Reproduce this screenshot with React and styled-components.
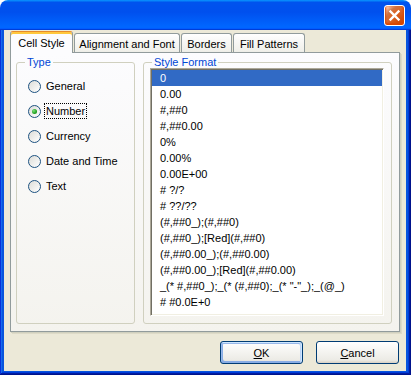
import React from "react";
import styled, { createGlobalStyle } from "styled-components";

const Global = createGlobalStyle`
  html, body { margin: 0; padding: 0; background: #ffffff; }
  body {
    font-family: "Liberation Sans", Tahoma, Arial, sans-serif;
    font-size: 11px;
    color: #000;
  }
  * { box-sizing: border-box; }
`;

const Window = styled.div`
  width: 411px;
  height: 375px;
  display: flex;
  flex-direction: column;
`;

const TitleBar = styled.div`
  flex: none;
  height: 30px;
  border-radius: 8px 8px 0 0;
  background: linear-gradient(
    180deg,
    #0997ff,
    #0053ee 8%,
    #0050ee 40%,
    #0066ff 88%,
    #0066ff 93%,
    #005bff 95%,
    #003dd7 96%,
    #003dd7
  );
  display: flex;
  justify-content: flex-end;
  align-items: flex-start;
  padding: 5px 6px 0 0;
`;

const CloseButton = styled.button`
  width: 21px;
  height: 21px;
  padding: 0;
  border: 1px solid #ffffff;
  border-radius: 3px;
  background: radial-gradient(
    circle at 90% 90%,
    #cc4600 0%,
    #dc6527 55%,
    #cd7546 70%,
    #ffccb2 90%,
    #ffffff 100%
  );
  box-shadow: inset 0 -1px 2px 1px #da4600;
  display: flex;
  align-items: center;
  justify-content: center;
`;

const Frame = styled.div`
  flex: 1;
  display: flex;
  padding: 0 5px 4px 4px;
  background: #0855dd;
  box-shadow: inset -1px -1px #00138c, inset 1px 0 #0831d9,
    inset -2px -2px #001ea0, inset 2px 0 #166aee, inset -3px -3px #003bda,
    inset 3px 0 #0855dd;
`;

const Client = styled.div`
  flex: 1;
  background: #ece9d8;
  display: flex;
  flex-direction: column;
  padding: 1px 6px 0 6px;
`;

const TabStrip = styled.div`
  height: 21px;
  display: flex;
  align-items: flex-end;
  gap: 1px;
  position: relative;
  z-index: 1;
`;

const Tab = styled.div`
  width: ${(p) => p.$w}px;
  height: ${(p) => (p.$active ? 22 : 19)}px;
  margin-bottom: ${(p) => (p.$active ? -1 : 0)}px;
  display: flex;
  align-items: center;
  justify-content: center;
  padding-top: ${(p) => (p.$active ? 0 : 1)}px;
  border: 1px solid #919b9c;
  border-bottom: none;
  border-radius: 3px 3px 0 0;
  border-top-color: ${(p) => (p.$active ? "#e68b2c" : "#919b9c")};
  background: ${(p) =>
    p.$active
      ? "#fcfcfe"
      : "linear-gradient(180deg, #fff, #fafaf9 26%, #f0f0ea 95%, #ecebe5)"};
  box-shadow: ${(p) => (p.$active ? "inset 0 2px #ffc83c" : "none")};
  white-space: nowrap;
`;

const TabPanel = styled.div`
  height: 280px;
  flex: none;
  border: 1px solid #919b9c;
  background: linear-gradient(180deg, #fcfcfe, #f4f3ee);
  box-shadow: 1px 1px #d0d0bf, 2px 2px #dedbc8;
  display: flex;
  gap: 8px;
  padding: 3px 7px 7px 5px;
`;

const Group = styled.fieldset`
  margin: 0;
  padding: 0;
  min-width: 0;
  border: 1px solid #d0d0bf;
  border-radius: 3px;
  display: flex;
  flex-direction: column;
  ${(p) => (p.$w ? `width: ${p.$w}px; flex: none;` : "flex: 1;")}
`;

const Legend = styled.legend`
  margin-left: 8px;
  padding: 0 2px;
  line-height: 12px;
  font-size: 11px;
  color: #0046d5;
`;

const RadioList = styled.div`
  display: flex;
  flex-direction: column;
  gap: 9px;
  padding: 10px 0 0 11px;
`;

const RadioRow = styled.div`
  height: 16px;
  display: flex;
  align-items: center;
`;

const RadioCircle = styled.span`
  width: 13px;
  height: 13px;
  flex: none;
  border-radius: 50%;
  border: 1px solid #1d5281;
  background: linear-gradient(135deg, #dcdcd7, #ffffff);
  display: flex;
  align-items: center;
  justify-content: center;
`;

const RadioDot = styled.span`
  width: 5px;
  height: 5px;
  border-radius: 50%;
  background: radial-gradient(circle at 35% 35%, #7be07a, #21a121 60%, #188418);
`;

const RadioLabel = styled.span`
  margin-left: 3px;
  height: 16px;
  line-height: 14px;
  padding: 0 1px;
  border: 1px dotted ${(p) => (p.$focus ? "#000" : "transparent")};
  white-space: nowrap;
`;

const ListBox = styled.div`
  flex: 1;
  margin: 0 7px 7px 6px;
  padding: 1px;
  background: #ffffff;
  border: 1px solid;
  border-color: #aca899 #ffffff #ffffff #aca899;
  box-shadow: inset 1px 1px #716f64, inset -1px -1px #f1efe2;
  overflow: hidden;
`;

const ListItem = styled.div`
  height: 16px;
  line-height: 16px;
  padding-left: 8px;
  white-space: nowrap;
  background: ${(p) => (p.$selected ? "#316ac5" : "transparent")};
  color: ${(p) => (p.$selected ? "#ffffff" : "#000000")};
`;

const ButtonRow = styled.div`
  display: flex;
  justify-content: flex-end;
  gap: 13px;
  margin-top: 9px;
  padding-right: 1px;
`;

const Button = styled.button`
  width: 83px;
  height: 23px;
  padding: 0;
  font-family: inherit;
  font-size: 11px;
  color: #000;
  border: 1px solid #003c74;
  border-radius: 3px;
  background: linear-gradient(180deg, #fff, #ecebe5 86%, #d8d0c4);
  box-shadow: ${(p) =>
    p.$default
      ? "inset -1px 1px #cee7ff, inset 1px 2px #98b8ea, inset -2px 2px #bcd4f6, inset 1px -1px #89ade4, inset 2px -2px #89ade4"
      : "none"};
`;

const types = ["General", "Number", "Currency", "Date and Time", "Text"];

const formats = [
  "0",
  "0.00",
  "#,##0",
  "#,##0.00",
  "0%",
  "0.00%",
  "0.00E+00",
  "# ?/?",
  "# ??/??",
  "(#,##0_);(#,##0)",
  "(#,##0_);[Red](#,##0)",
  "(#,##0.00_);(#,##0.00)",
  "(#,##0.00_);[Red](#,##0.00)",
  '_(* #,##0_);_(* (#,##0);_(* "-"_);_(@_)',
  "# #0.0E+0",
];

const tabs = [
  { label: "Cell Style", w: 63, active: true },
  { label: "Alignment and Font", w: 106 },
  { label: "Borders", w: 51 },
  { label: "Fill Patterns", w: 72 },
];

export default function App() {
  return (
    <>
      <Global />
      <Window>
        <TitleBar>
          <CloseButton aria-label="Close">
            <svg width="13" height="13" viewBox="0 0 13 13">
              <path
                d="M2.5 2.5 L10.5 10.5 M10.5 2.5 L2.5 10.5"
                stroke="#ffffff"
                strokeWidth="2.4"
                strokeLinecap="square"
              />
            </svg>
          </CloseButton>
        </TitleBar>
        <Frame>
          <Client>
            <TabStrip>
              {tabs.map((t) => (
                <Tab key={t.label} $w={t.w} $active={t.active}>
                  {t.label}
                </Tab>
              ))}
            </TabStrip>
            <TabPanel>
              <Group $w={119}>
                <Legend>Type</Legend>
                <RadioList>
                  {types.map((t) => (
                    <RadioRow key={t}>
                      <RadioCircle>{t === "Number" && <RadioDot />}</RadioCircle>
                      <RadioLabel $focus={t === "Number"}>{t}</RadioLabel>
                    </RadioRow>
                  ))}
                </RadioList>
              </Group>
              <Group>
                <Legend>Style Format</Legend>
                <ListBox>
                  {formats.map((f, i) => (
                    <ListItem key={f} $selected={i === 0}>
                      {f}
                    </ListItem>
                  ))}
                </ListBox>
              </Group>
            </TabPanel>
            <ButtonRow>
              <Button $default>
                <u>O</u>K
              </Button>
              <Button>
                <u>C</u>ancel
              </Button>
            </ButtonRow>
          </Client>
        </Frame>
      </Window>
    </>
  );
}
